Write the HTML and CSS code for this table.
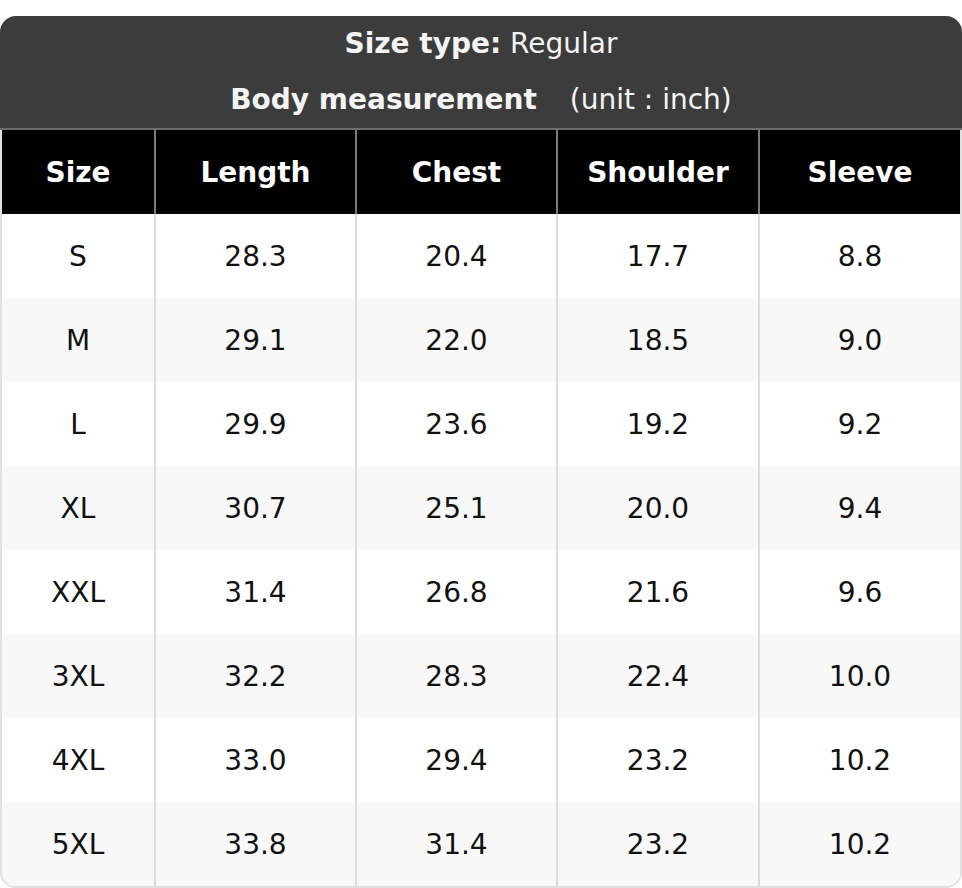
FILE: index.html
```html
<!DOCTYPE html>
<html>
<head>
<meta charset="utf-8">
<link rel="stylesheet" href="styles.css">
</head>
<body>
<div class="chart">
  <div class="title">
    <div class="title-line"><b>Size type:</b> Regular</div>
    <div class="title-line"><b>Body measurement</b> <span class="unit">(unit : inch)</span></div>
  </div>
  <div class="table">
    <div class="row head">
      <div class="cell">Size</div><div class="cell">Length</div><div class="cell">Chest</div><div class="cell">Shoulder</div><div class="cell">Sleeve</div>
    </div>
    <div class="row"><div class="cell">S</div><div class="cell">28.3</div><div class="cell">20.4</div><div class="cell">17.7</div><div class="cell">8.8</div></div>
    <div class="row"><div class="cell">M</div><div class="cell">29.1</div><div class="cell">22.0</div><div class="cell">18.5</div><div class="cell">9.0</div></div>
    <div class="row"><div class="cell">L</div><div class="cell">29.9</div><div class="cell">23.6</div><div class="cell">19.2</div><div class="cell">9.2</div></div>
    <div class="row"><div class="cell">XL</div><div class="cell">30.7</div><div class="cell">25.1</div><div class="cell">20.0</div><div class="cell">9.4</div></div>
    <div class="row"><div class="cell">XXL</div><div class="cell">31.4</div><div class="cell">26.8</div><div class="cell">21.6</div><div class="cell">9.6</div></div>
    <div class="row"><div class="cell">3XL</div><div class="cell">32.2</div><div class="cell">28.3</div><div class="cell">22.4</div><div class="cell">10.0</div></div>
    <div class="row"><div class="cell">4XL</div><div class="cell">33.0</div><div class="cell">29.4</div><div class="cell">23.2</div><div class="cell">10.2</div></div>
    <div class="row"><div class="cell">5XL</div><div class="cell">33.8</div><div class="cell">31.4</div><div class="cell">23.2</div><div class="cell">10.2</div></div>
  </div>
</div>
</body>
</html>
```
FILE: styles.css
```css
html, body {
  margin: 0;
  padding: 0;
  background: #ffffff;
}
body {
  padding-top: 16px;
  font-family: "DejaVu Sans", "Liberation Sans", sans-serif;
  font-size: 28px;
  color: #111111;
}
.chart {
  width: 962px;
}
.title {
  background: #3c3c3c;
  color: #f4f4f4;
  border-radius: 16px 16px 0 0;
  border-bottom: 2px solid #6e6e6e;
  text-align: center;
}
.title-line {
  height: 56px;
  line-height: 56px;
}
.title b {
  font-weight: bold;
}
.unit {
  padding-left: 24px;
}
.table {
  border: 2px solid #e0e0e0;
  border-top: 0;
  border-radius: 0 0 16px 16px;
  overflow: hidden;
}
.row {
  display: grid;
  grid-template-columns: 152px 201px 201px 202px 202px;
  height: 84px;
}
.row:nth-child(odd) {
  background: #f8f8f8;
}
.row.head {
  background: #000000;
  color: #ffffff;
  font-weight: bold;
  margin: 0 -2px;
  padding: 0 2px;
}
.cell {
  display: flex;
  align-items: center;
  justify-content: center;
  border-left: 2px solid #dcdcdc;
}
.cell:first-child {
  border-left: 0;
}
.head .cell {
  border-left-color: #7a7a7a;
}
.head .cell:first-child {
  border-left: 0;
}
```
